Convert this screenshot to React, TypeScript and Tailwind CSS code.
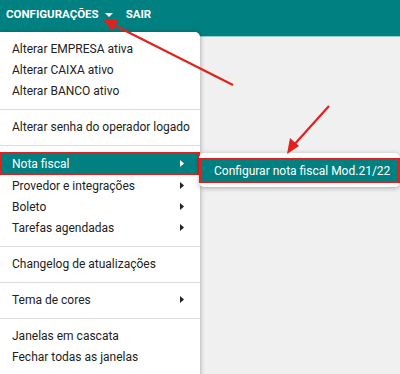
import React from 'react';

type Item = { label: string; sub?: boolean; active?: boolean };

const groups: Item[][] = [
  [
    { label: 'Alterar EMPRESA ativa' },
    { label: 'Alterar CAIXA ativo' },
    { label: 'Alterar BANCO ativo' },
  ],
  [{ label: 'Alterar senha do operador logado' }],
  [
    { label: 'Nota fiscal', sub: true, active: true },
    { label: 'Provedor e integrações', sub: true },
    { label: 'Boleto', sub: true },
    { label: 'Tarefas agendadas', sub: true },
  ],
  [{ label: 'Changelog de atualizações' }],
  [{ label: 'Tema de cores', sub: true }],
  [{ label: 'Janelas em cascata' }, { label: 'Fechar todas as janelas' }],
];

function Caret({ light }: { light?: boolean }) {
  return (
    <svg width="4" height="7" viewBox="0 0 4 7" className="mr-[16px] shrink-0">
      <path d="M0 0 L4 3.5 L0 7 Z" fill={light ? '#ffffff' : '#222222'} />
    </svg>
  );
}

function MenuRow({ item }: { item: Item }) {
  if (item.active) {
    return (
      <div className="relative flex h-[23px] items-center justify-between border-2 border-[#e3201e] bg-[#008080] pl-[10px] text-white">
        <span className="whitespace-nowrap">{item.label}</span>
        <span className="-mr-[2px]">
          <Caret light />
        </span>
        {/* submenu */}
        <div className="absolute left-[197px] top-[-1px] z-20 w-[201px] rounded-[5px] bg-white pt-[5px] pb-[4px] shadow-[0_1px_5px_rgba(0,0,0,0.3)]">
          <div className="flex h-[25px] items-center whitespace-nowrap border-2 border-[#e3201e] bg-[#008080] pl-[13px] text-[12px] text-white">
            Configurar nota fiscal Mod.21/22
          </div>
        </div>
      </div>
    );
  }
  return (
    <div className="flex h-[21px] items-center justify-between pl-[12px] text-[#222]">
      <span className="whitespace-nowrap">{item.label}</span>
      {item.sub && <Caret />}
    </div>
  );
}

export default function App() {
  return (
    <div
      className="relative h-[374px] w-[400px] overflow-hidden bg-[#f0f0f0] text-[12px]"
      style={{ fontFamily: 'Roboto, "Liberation Sans", sans-serif' }}
    >
      <header className="flex h-[37px] items-center gap-[13px] border-b border-[#9cc9c9] bg-[#008080] pl-[6px] pb-[6px] text-[11.5px] font-bold text-white">
        <div className="flex items-center gap-[6px]">
          <span>CONFIGURAÇÕES</span>
          <svg width="8" height="4" viewBox="0 0 8 4">
            <path d="M0 0 L8 0 L4 4 Z" fill="#ffffff" />
          </svg>
        </div>
        <span>SAIR</span>
      </header>

      <div className="absolute left-0 top-[32px] z-10 h-[360px] w-[200px] rounded-tr-[5px] bg-white pt-[6px] shadow-[1px_0_4px_rgba(0,0,0,0.25)]">
        {groups.map((g, gi) => (
          <div key={gi}>
            {gi > 0 && <div className="mt-[8px] mb-[6px] h-px bg-[#dcdcdc]" />}
            {g.map((it) => (
              <MenuRow key={it.label} item={it} />
            ))}
          </div>
        ))}
      </div>

      {/* annotation arrows */}
      <svg className="pointer-events-none absolute left-0 top-0 z-30" width="400" height="374">
        <line x1="233" y1="85" x2="112" y2="24" stroke="#e3201e" strokeWidth="2.2" />
        <path d="M103 19 L118 20 L112 31 Z" fill="#e3201e" />
        <line x1="329" y1="106" x2="293" y2="146" stroke="#e3201e" strokeWidth="2.2" />
        <path d="M287 154 L290 138 L299 146 Z" fill="#e3201e" />
      </svg>
    </div>
  );
}
